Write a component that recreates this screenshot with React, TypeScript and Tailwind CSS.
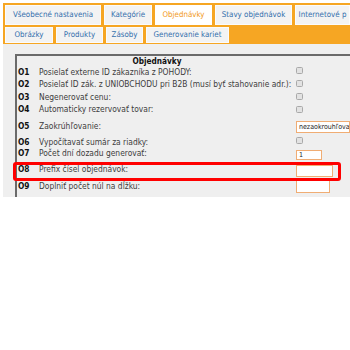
import React from "react";

type Row = {
  id: string;
  label: string;
  h: string;
  tp: string;
  cp: string;
  control: React.ReactNode;
};

function Check() {
  return (
    <div className="w-[7px] h-[7px] rounded-[1.5px] border border-[#a9a9a9] bg-[#e2e2e2]" />
  );
}

function Field({ w, value }: { w: string; value?: string }) {
  return (
    <div
      className={`${w} h-full border border-[#f0ad74] bg-white text-[7px] leading-[9px] text-[#222] pl-[2px] flex items-center whitespace-nowrap overflow-hidden`}
    >
      {value}
    </div>
  );
}

const rows: Row[] = [
  { id: "O1", label: "Posielať externe ID zákazníka z POHODY:", h: "h-[12px]", tp: "pt-[1px]", cp: "pt-[1px]", control: <Check /> },
  { id: "O2", label: "Posielať ID zák. z UNIOBCHODU pri B2B (musí byť stahovanie adr.):", h: "h-[13px]", tp: "pt-[1px]", cp: "pt-[2px]", control: <Check /> },
  { id: "O3", label: "Negenerovať cenu:", h: "h-[12px]", tp: "pt-[1px]", cp: "pt-[2px]", control: <Check /> },
  { id: "O4", label: "Automaticky rezervovať tovar:", h: "h-[13px]", tp: "pt-[1px]", cp: "pt-[3px]", control: <Check /> },
  {
    id: "O5",
    label: "Zaokrúhľovanie:",
    h: "h-[20px]",
    tp: "pt-[5px]",
    cp: "pt-[5px]",
    control: (
      <div className="h-[12px]">
        <Field w="w-[54px]" value="nezaokrouhľovať" />
      </div>
    ),
  },
  { id: "O6", label: "Vypočítavať sumár za riadky:", h: "h-[12px]", tp: "pt-[1px]", cp: "pt-[1px]", control: <Check /> },
  {
    id: "O7",
    label: "Počet dní dozadu generovať:",
    h: "h-[13px]",
    tp: "pt-[0px]",
    cp: "pt-[2px]",
    control: (
      <div className="h-[10px]">
        <Field w="w-[26px]" value="1" />
      </div>
    ),
  },
  {
    id: "O8",
    label: "Prefix čísel objednávok:",
    h: "h-[18px]",
    tp: "pt-[3px]",
    cp: "pt-[4px]",
    control: (
      <div className="h-[12px]">
        <Field w="w-[37px]" />
      </div>
    ),
  },
  {
    id: "O9",
    label: "Doplniť počet núl na dĺžku:",
    h: "h-[17px]",
    tp: "pt-[2px]",
    cp: "pt-[1px]",
    control: (
      <div className="h-[13px]">
        <Field w="w-[34px]" />
      </div>
    ),
  },
];

const tabsTop = [
  { name: "Všeobecné nastavenia", w: "w-[96px]" },
  { name: "Kategórie", w: "w-[48px]" },
  { name: "Objednávky", w: "w-[57px]", active: true },
  { name: "Stavy objednávok", w: "w-[77px]" },
  { name: "Internetové p", w: "w-[55px]" },
];

const tabsBottom = [
  { name: "Obrázky", w: "w-[48px]" },
  { name: "Produkty", w: "w-[47px]" },
  { name: "Zásoby", w: "w-[37px]" },
  { name: "Generovanie kariet", w: "w-[83px]" },
];

function Tab({ name, w, active }: { name: string; w: string; active?: boolean }) {
  return (
    <div
      className={`${w} shrink-0 h-full flex items-center justify-center whitespace-nowrap overflow-hidden text-[7.9px] border ${
        active
          ? "bg-white text-[#f29a1c] border-white"
          : "bg-[#f3f3f3] text-[#3470ad] border-[#fbfbfb]"
      }`}
    >
      {name}
    </div>
  );
}

export default function App() {
  return (
    <div className="relative w-[350px] h-[350px] bg-white overflow-hidden font-['DejaVu_Sans_Condensed','Liberation_Sans',sans-serif]">
      <div className="ml-[3px] mt-[3px] w-[347px] overflow-hidden">
        <div className="bg-[#f6a623] pt-[2px] pl-[2px] pb-[1px] flex flex-col gap-[2px]">
          <div className="flex gap-[3px] h-[20px]">
            {tabsTop.map((t) => (
              <Tab key={t.name} {...t} />
            ))}
          </div>
          <div className="flex gap-[3px] h-[16px]">
            {tabsBottom.map((t) => (
              <Tab key={t.name} {...t} />
            ))}
          </div>
        </div>

        <div className="bg-[#efefef] pt-[10px] pl-[12px] h-[153px]">
          <div className="h-full border-l-2 border-t-2 border-[#6a6a6a]">
            <div className="w-[280px] h-[10px] text-center text-[8.2px] leading-[10px] font-bold text-[#111]">
              Objednávky
            </div>
            {rows.map((r) => (
              <div key={r.id} className={`flex ${r.h}`}>
                <div className={`w-[22px] pl-[1px] ${r.tp} text-[8.3px] leading-[10px] font-bold text-[#111]`}>
                  {r.id}
                </div>
                <div className={`w-[257px] ${r.tp} text-[8.4px] leading-[10px] text-[#3c3c3c] whitespace-nowrap`}>
                  {r.label}
                </div>
                <div className={`${r.cp}`}>{r.control}</div>
              </div>
            ))}
          </div>
        </div>
      </div>

      <div className="absolute left-[13px] top-[162px] w-[328px] h-[19px] border-[3px] border-[#ff0000] rounded-[3px]" />
    </div>
  );
}
